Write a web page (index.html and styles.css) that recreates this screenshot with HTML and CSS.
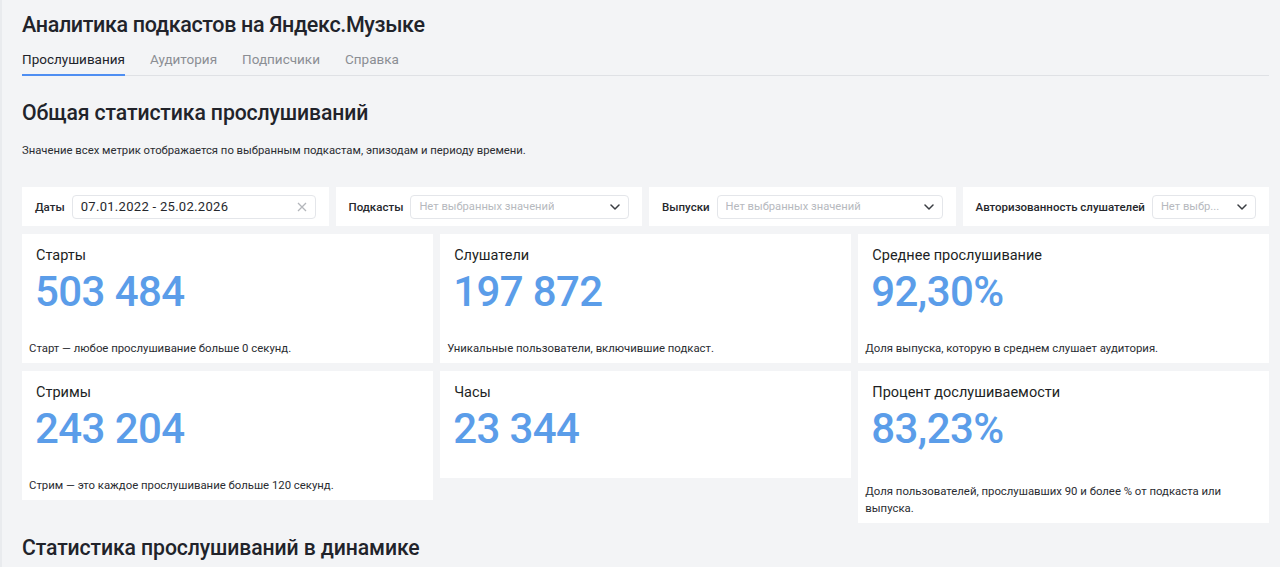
FILE: index.html
```html
<!DOCTYPE html>
<html lang="ru">
<head>
<meta charset="utf-8">
<title>Аналитика подкастов на Яндекс.Музыке</title>
<link rel="stylesheet" href="styles.css">
</head>
<body>
<div class="page">
  <h1 class="page-title">Аналитика подкастов на Яндекс.Музыке</h1>
  <nav class="tabs">
    <a class="tab tab-active">Прослушивания</a>
    <a class="tab">Аудитория</a>
    <a class="tab">Подписчики</a>
    <a class="tab">Справка</a>
  </nav>

  <h2 class="section-title">Общая статистика прослушиваний</h2>
  <p class="section-desc">Значение всех метрик отображается по выбранным подкастам, эпизодам и периоду времени.</p>

  <div class="filters">
    <div class="filter">
      <span class="filter-label">Даты</span>
      <div class="field">
        <span class="field-value">07.01.2022 - 25.02.2026</span>
        <svg class="icon-clear" width="10" height="10" viewBox="0 0 10 10"><path d="M1 1L9 9M9 1L1 9" stroke="#b3b6bb" stroke-width="1.3" fill="none"/></svg>
      </div>
    </div>
    <div class="filter">
      <span class="filter-label">Подкасты</span>
      <div class="field">
        <span class="field-placeholder">Нет выбранных значений</span>
        <svg class="icon-chevron" width="10" height="6" viewBox="0 0 10 6"><path d="M1 1L5 5L9 1" stroke="#3a3d42" stroke-width="1.5" fill="none" stroke-linecap="round" stroke-linejoin="round"/></svg>
      </div>
    </div>
    <div class="filter">
      <span class="filter-label">Выпуски</span>
      <div class="field">
        <span class="field-placeholder">Нет выбранных значений</span>
        <svg class="icon-chevron" width="10" height="6" viewBox="0 0 10 6"><path d="M1 1L5 5L9 1" stroke="#3a3d42" stroke-width="1.5" fill="none" stroke-linecap="round" stroke-linejoin="round"/></svg>
      </div>
    </div>
    <div class="filter">
      <span class="filter-label">Авторизованность слушателей</span>
      <div class="field">
        <span class="field-placeholder">Нет выбр...</span>
        <svg class="icon-chevron" width="10" height="6" viewBox="0 0 10 6"><path d="M1 1L5 5L9 1" stroke="#3a3d42" stroke-width="1.5" fill="none" stroke-linecap="round" stroke-linejoin="round"/></svg>
      </div>
    </div>
  </div>

  <div class="cards">
    <div class="card-col">
      <div class="card">
        <div class="card-title">Старты</div>
        <div class="card-value">503 484</div>
        <div class="card-desc">Старт — любое прослушивание больше 0 секунд.</div>
      </div>
      <div class="card">
        <div class="card-title">Стримы</div>
        <div class="card-value">243 204</div>
        <div class="card-desc">Стрим — это каждое прослушивание больше 120 секунд.</div>
      </div>
    </div>
    <div class="card-col">
      <div class="card">
        <div class="card-title">Слушатели</div>
        <div class="card-value">197 872</div>
        <div class="card-desc">Уникальные пользователи, включившие подкаст.</div>
      </div>
      <div class="card">
        <div class="card-title">Часы</div>
        <div class="card-value">23 344</div>
      </div>
    </div>
    <div class="card-col">
      <div class="card">
        <div class="card-title">Среднее прослушивание</div>
        <div class="card-value">92,30%</div>
        <div class="card-desc">Доля выпуска, которую в среднем слушает аудитория.</div>
      </div>
      <div class="card">
        <div class="card-title">Процент дослушиваемости</div>
        <div class="card-value">83,23%</div>
        <div class="card-desc card-desc-multi">Доля пользователей, прослушавших 90 и более % от подкаста или выпуска.</div>
      </div>
    </div>
  </div>

  <h2 class="section-title section-title-next">Статистика прослушиваний в динамике</h2>
</div>
</body>
</html>
```

FILE: styles.css
```css
* { box-sizing: border-box; }

html, body {
  margin: 0;
  padding: 0;
  background: #f3f4f6;
}

body {
  font-family: Roboto, "Noto Sans", "Liberation Sans", sans-serif;
  color: #21232a;
  height: 567px;
  overflow: hidden;
}

.page {
  padding: 12px 11px 0 20px;
  border-left: 2px solid #e9ebee;
  min-height: 567px;
}

.page-title {
  margin: 0;
  font-size: 21.5px;
  line-height: 26px;
  font-weight: 500;
  letter-spacing: -0.35px;
}

.tabs {
  display: flex;
  gap: 25px;
  margin-top: 8px;
  border-bottom: 1px solid #dfe1e5;
}

.tab {
  display: block;
  font-size: 13.5px;
  line-height: 18px;
  padding: 4px 0 6px;
  color: #8b8e94;
  border-bottom: 2px solid transparent;
  margin-bottom: -1px;
  cursor: pointer;
}

.tab-active {
  color: #21232a;
  border-bottom-color: #4e8ef2;
}

.section-title {
  margin: 25px 0 0;
  font-size: 21.2px;
  line-height: 24px;
  font-weight: 500;
  letter-spacing: -0.1px;
}

.section-desc {
  margin: 18px 0 0;
  font-size: 11.3px;
  line-height: 16px;
  color: #2a2c31;
}

.filters {
  display: grid;
  grid-template-columns: repeat(4, 1fr);
  gap: 7px;
  margin-top: 28px;
}

.filter {
  background: #fff;
  height: 39px;
  display: flex;
  align-items: center;
  gap: 7px;
  padding: 0 13px;
}

.filter-label {
  font-size: 11.5px;
  font-weight: 500;
  white-space: nowrap;
  color: #26282d;
}

.field {
  flex: 1;
  min-width: 0;
  height: 24px;
  border: 1px solid #e4e6ea;
  border-radius: 4px;
  display: flex;
  align-items: center;
  justify-content: space-between;
  padding: 0 8px 0 8px;
  font-size: 11.2px;
}

.field-value {
  color: #26282d;
  white-space: nowrap;
  font-size: 13px;
  letter-spacing: 0.3px;
}

.field-placeholder {
  color: #b6b9be;
  white-space: nowrap;
  overflow: hidden;
}

.icon-clear, .icon-chevron { flex: none; }

.cards {
  display: grid;
  grid-template-columns: repeat(3, 1fr);
  gap: 7.5px;
  margin-top: 8px;
  align-items: start;
}

.card-col {
  display: flex;
  flex-direction: column;
  gap: 8px;
}

.card {
  background: #fff;
  padding: 13px 0 6px;
}

.card-title {
  padding: 0 14px;
  font-size: 14.5px;
  line-height: 18px;
  font-weight: 400;
  color: #1d1f24;
}

.card-value {
  padding: 0 13px;
  margin-top: 2px;
  font-size: 42px;
  line-height: 50px;
  font-weight: 500;
  letter-spacing: -0.6px;
  color: #5b9de9;
  margin-bottom: 23px;
}

.card-value:last-child {
  margin-bottom: 18px;
}

.card-desc {
  padding: 0 7px;
  font-size: 11.35px;
  line-height: 17px;
  color: #2a2c31;
}

.card-desc-multi {
  padding-top: 6px;
  max-width: 374px;
}

.section-title-next {
  margin-top: 13px;
}
```
